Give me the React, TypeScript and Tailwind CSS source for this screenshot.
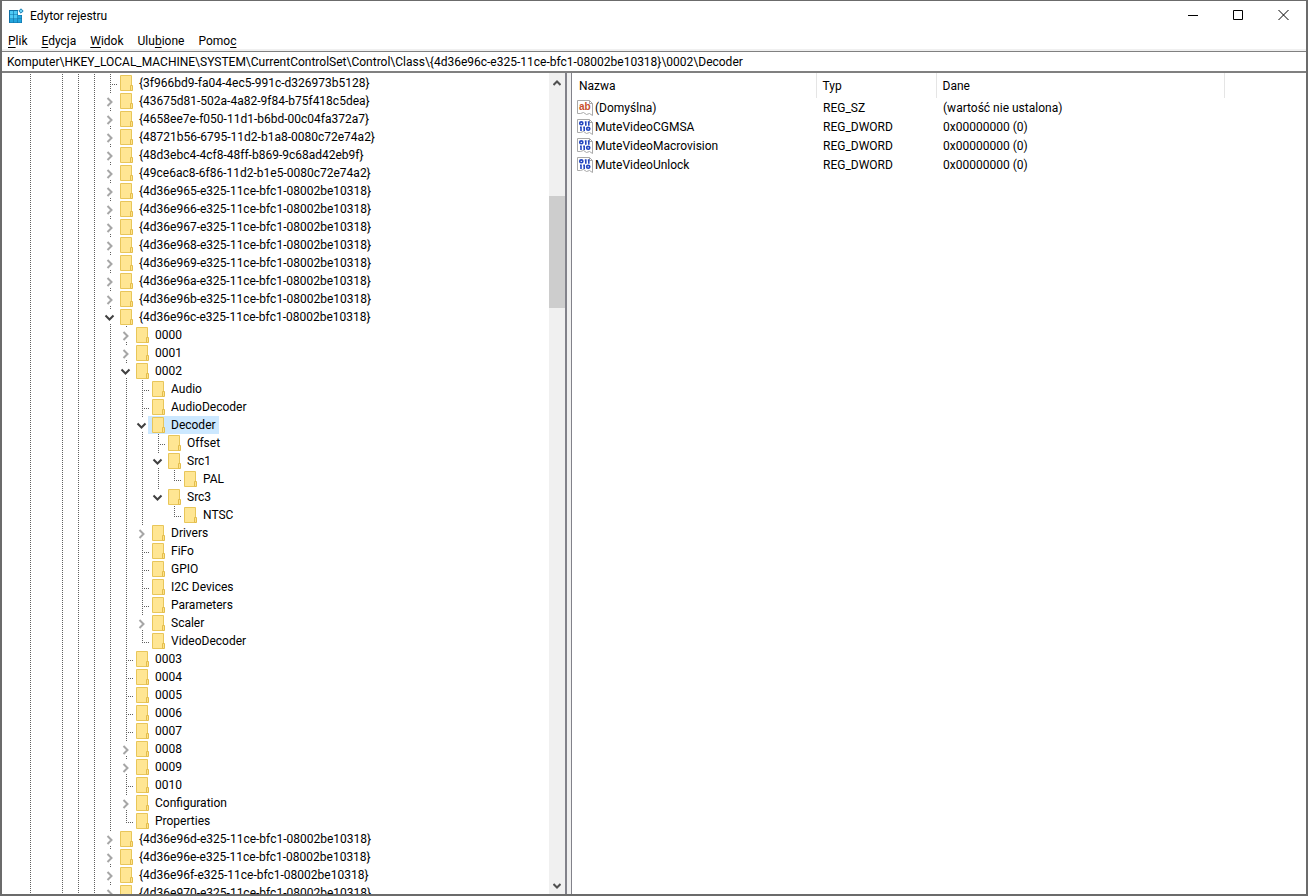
import { ReactNode, useState } from "react";

type NodeState = "open" | "closed" | "leaf";

interface TreeRow {
  name: string;
  state: NodeState;
  /**
   * One flag per ancestor column, true where the guide line runs through
   */
  guides: boolean[];
  /**
   * Does the guide line stop at this row?
   */
  last?: boolean;
}

const ROOT = [true, false, true, true, true];
const SUB = [...ROOT, true];
const DEVICE = [...SUB, true];
const DECODER = [...DEVICE, true];

const row = (
  guides: boolean[],
  name: string,
  state: NodeState = "leaf",
  last = false,
): TreeRow => ({ guides, name, state, last });

const rows: TreeRow[] = [
  row(ROOT, "{3f966bd9-fa04-4ec5-991c-d326973b5128}"),
  row(ROOT, "{43675d81-502a-4a82-9f84-b75f418c5dea}", "closed"),
  row(ROOT, "{4658ee7e-f050-11d1-b6bd-00c04fa372a7}", "closed"),
  row(ROOT, "{48721b56-6795-11d2-b1a8-0080c72e74a2}", "closed"),
  row(ROOT, "{48d3ebc4-4cf8-48ff-b869-9c68ad42eb9f}", "closed"),
  row(ROOT, "{49ce6ac8-6f86-11d2-b1e5-0080c72e74a2}", "closed"),
  row(ROOT, "{4d36e965-e325-11ce-bfc1-08002be10318}", "closed"),
  row(ROOT, "{4d36e966-e325-11ce-bfc1-08002be10318}", "closed"),
  row(ROOT, "{4d36e967-e325-11ce-bfc1-08002be10318}", "closed"),
  row(ROOT, "{4d36e968-e325-11ce-bfc1-08002be10318}", "closed"),
  row(ROOT, "{4d36e969-e325-11ce-bfc1-08002be10318}", "closed"),
  row(ROOT, "{4d36e96a-e325-11ce-bfc1-08002be10318}", "closed"),
  row(ROOT, "{4d36e96b-e325-11ce-bfc1-08002be10318}", "closed"),
  row(ROOT, "{4d36e96c-e325-11ce-bfc1-08002be10318}", "open"),
  row(SUB, "0000", "closed"),
  row(SUB, "0001", "closed"),
  row(SUB, "0002", "open"),
  row(DEVICE, "Audio"),
  row(DEVICE, "AudioDecoder"),
  row(DEVICE, "Decoder", "open"),
  row(DECODER, "Offset"),
  row(DECODER, "Src1", "open"),
  row([...DECODER, true], "PAL", "leaf", true),
  row(DECODER, "Src3", "open", true),
  row([...DECODER, false], "NTSC", "leaf", true),
  row(DEVICE, "Drivers", "closed"),
  row(DEVICE, "FiFo"),
  row(DEVICE, "GPIO"),
  row(DEVICE, "I2C Devices"),
  row(DEVICE, "Parameters"),
  row(DEVICE, "Scaler", "closed"),
  row(DEVICE, "VideoDecoder", "leaf", true),
  row(SUB, "0003"),
  row(SUB, "0004"),
  row(SUB, "0005"),
  row(SUB, "0006"),
  row(SUB, "0007"),
  row(SUB, "0008", "closed"),
  row(SUB, "0009", "closed"),
  row(SUB, "0010"),
  row(SUB, "Configuration", "closed"),
  row(SUB, "Properties", "leaf", true),
  row(ROOT, "{4d36e96d-e325-11ce-bfc1-08002be10318}", "closed"),
  row(ROOT, "{4d36e96e-e325-11ce-bfc1-08002be10318}", "closed"),
  row(ROOT, "{4d36e96f-e325-11ce-bfc1-08002be10318}", "closed"),
  row(ROOT, "{4d36e970-e325-11ce-bfc1-08002be10318}", "closed"),
];

const values = [
  { name: "(Domyślna)", type: "REG_SZ", data: "(wartość nie ustalona)" },
  { name: "MuteVideoCGMSA", type: "REG_DWORD", data: "0x00000000 (0)" },
  { name: "MuteVideoMacrovision", type: "REG_DWORD", data: "0x00000000 (0)" },
  { name: "MuteVideoUnlock", type: "REG_DWORD", data: "0x00000000 (0)" },
];

// label split around the underlined access key
const menu = [
  ["", "P", "lik"],
  ["", "E", "dycja"],
  ["", "W", "idok"],
  ["Ulu", "b", "ione"],
  ["Pomo", "c", ""],
];

const RegistryIcon = () => (
  <svg width="16" height="16" viewBox="0 0 16 16" aria-hidden="true">
    <path d="M1 2h9v5h4v8H1z" fill="#0f6fa5" />
    <path
      d="M2 3h3.400v3.400H2zM6 3h3.400v3.400H6zM2 7h3.400v3.400H2zM6 7h3.400v3.400H6z"
      fill="#4cc9f5"
    />
    <path
      d="M10 7.500h3.400v3H10zM2 11h3.400v3.400H2zM6 11h3.400v3.400H6zM10 11h3.400v3.400h-3.400z"
      fill="#22a5dd"
    />
    <path d="M13 .8 15.2 3 13 5.2 10.8 3z" fill="#6fd3f7" stroke="#1b7fb3" />
  </svg>
);

const FolderIcon = () => (
  <svg width="16" height="18" viewBox="0 0 16 18" aria-hidden="true">
    <path d="M.5 1.5h11v15H.5z" fill="#ffe693" stroke="#e8c65a" />
    <path d="M10.5 11.5h2v5h-2z" fill="#ffe38a" stroke="#e3bd4c" />
  </svg>
);

const StringIcon = () => (
  <ValuePage>
    <text
      x="2"
      y="10"
      fontFamily="Liberation Sans"
      fontSize="10"
      fontWeight="700"
      fill="#c8502d">
      ab
    </text>
  </ValuePage>
);

const BinaryIcon = () => (
  <ValuePage>
    <g fill="none" stroke="#2447c0" strokeWidth="1.6">
      <ellipse cx="4.3" cy="4.3" rx="1.6" ry="1.4" />
      <path d="M8.8 2.300v4.400M11.8 2.300v4.400M7.8 3h1M10.8 3h1" />
      <path d="M4 7.600v4.400M7.200 7.600v4.400M3 8.300h1M6.200 8.300h1" />
      <ellipse cx="11.2" cy="9.8" rx="1.6" ry="1.4" />
    </g>
  </ValuePage>
);

const ValuePage = ({ children }: { children: ReactNode }) => (
  <svg
    width="16"
    height="16"
    viewBox="0 0 16 16"
    className="shrink-0"
    aria-hidden="true">
    <path
      d="M.5.5h12l3 3v12l-3-2-3 1-3-2-3 1h-3z"
      fill="#fff"
      stroke="#a9a9a9"
    />
    <path d="M12.5.5v3h3" fill="none" stroke="#a9a9a9" />
    {children}
  </svg>
);

const Guide = ({ visible }: { visible: boolean }) => (
  <svg width="16" height="18" className="shrink-0" aria-hidden="true">
    {visible && (
      <path d="M10.5 0v18" stroke="#606060" strokeDasharray="1 1" />
    )}
  </svg>
);

const Expander = ({ state, last }: { state: NodeState; last?: boolean }) => (
  <svg
    width="16"
    height="18"
    className="shrink-0 overflow-visible"
    aria-hidden="true">
    {state === "leaf" ? (
      <g stroke="#606060" strokeDasharray="1 1">
        <path d={last ? "M10.5 0v11" : "M10.5 0v18"} />
        <path d="M10 10.5h8" />
      </g>
    ) : (
      <>
        <path d="M10.5 0v1" stroke="#606060" />
        {!last && <path d="M10.5 16v1" stroke="#606060" />}
        <path
          d={state === "open" ? "M5.5 7.5l4 4 4-4" : "M7.5 6l4 4-4 4"}
          fill="none"
          stroke={state === "open" ? "#404040" : "#a6a6a6"}
          strokeWidth="2"
        />
      </>
    )}
  </svg>
);

const ScrollArrow = ({ up }: { up?: boolean }) => (
  <button
    type="button"
    aria-label={up ? "W górę" : "W dół"}
    className="flex h-4 items-center justify-center">
    <svg width="8" height="6" viewBox="0 0 8 6" aria-hidden="true">
      <path
        d={up ? "M.5 5L4 1.5 7.5 5" : "M.5 1L4 4.5 7.5 1"}
        fill="none"
        stroke="#505050"
        strokeWidth="2"
      />
    </svg>
  </button>
);

export default function App() {
  const [selected, setSelected] = useState("Decoder");
  const [path, setPath] = useState(
    "Komputer\\HKEY_LOCAL_MACHINE\\SYSTEM\\CurrentControlSet\\Control\\Class\\{4d36e96c-e325-11ce-bfc1-08002be10318}\\0002\\Decoder",
  );

  return (
    <div className="flex h-screen flex-col overflow-hidden border-2 border-t border-[#6b6b6b] bg-white font-['Roboto',sans-serif] text-xs text-black">
      <header className="flex h-[30px] shrink-0 items-center pl-1.5">
        <RegistryIcon />
        <h1 className="ml-1.5 flex-1">Edytor rejestru</h1>
        <button
          type="button"
          aria-label="Minimalizuj"
          className="flex h-7 w-[45px] items-center justify-center self-start">
          <svg width="11" height="10" aria-hidden="true">
            <path d="M0 5.5h10" stroke="#000" />
          </svg>
        </button>
        <button
          type="button"
          aria-label="Maksymalizuj"
          className="flex h-7 w-[45px] items-center justify-center self-start">
          <svg width="11" height="10" aria-hidden="true">
            <path d="M.5.5h9v9h-9z" fill="none" stroke="#000" />
          </svg>
        </button>
        <button
          type="button"
          aria-label="Zamknij"
          className="flex h-7 w-[45px] items-center justify-center self-start">
          <svg width="11" height="10" aria-hidden="true">
            <path d="M.5 0l10 10M10.5 0l-10 10" stroke="#000" />
          </svg>
        </button>
      </header>

      <nav className="flex h-5 shrink-0 items-center gap-3.5 border-b-2 border-[#f0f0f0] pt-0.5 pl-1.5">
        {menu.map(([before, key, after]) => (
          <button key={before + key} type="button">
            {before}
            <span className="underline underline-offset-2">{key}</span>
            {after}
          </button>
        ))}
      </nav>

      <input
        type="text"
        aria-label="Adres"
        value={path}
        onChange={(e) => setPath(e.target.value)}
        className="h-[22px] w-full shrink-0 border-t border-b-2 border-[#808080] px-[5px] outline-none"
      />

      <main className="flex min-h-0 flex-1">
        <section className="flex w-[565px] shrink-0 border-r-2 border-[#82828a]">
          <ul className="min-w-0 flex-1 overflow-hidden pt-px pl-[18px]">
            {rows.map(({ guides, name, state, last }) => (
              <li key={name} className="flex h-[18px]">
                {guides.map((visible, i) => (
                  <Guide key={i} visible={visible} />
                ))}
                <Expander state={state} last={last} />
                <button
                  type="button"
                  onClick={() => setSelected(name)}
                  className={
                    name === selected
                      ? "flex items-center gap-[3px] bg-[#cce8ff] pr-[3px] pl-1 whitespace-nowrap"
                      : "flex items-center gap-[3px] pr-[3px] pl-1 whitespace-nowrap"
                  }>
                  <FolderIcon />
                  {name}
                </button>
              </li>
            ))}
          </ul>
          <div className="flex w-4 shrink-0 flex-col justify-between bg-[#f0f0f0] pt-0.5">
            <ScrollArrow up />
            <div className="flex flex-1 flex-col pt-[105px]">
              <div className="h-28 bg-[#cdcdcd]" />
            </div>
            <ScrollArrow />
          </div>
        </section>

        <div className="w-1 shrink-0 bg-[#f0f0f0]" />

        <section className="min-w-0 flex-1 overflow-hidden border-l border-[#82828a]">
          <table className="w-full table-fixed border-collapse text-left">
            <colgroup>
              <col className="w-[244px]" />
              <col className="w-[120px]" />
              <col className="w-[288px]" />
              <col />
            </colgroup>
            <thead>
              <tr className="h-[25px]">
                <th className="border-r border-[#e5e5e5] pl-[7px] font-normal">
                  Nazwa
                </th>
                <th className="border-r border-[#e5e5e5] pl-1.5 font-normal">
                  Typ
                </th>
                <th className="border-r border-[#e5e5e5] pl-1.5 font-normal">
                  Dane
                </th>
                <td />
              </tr>
            </thead>
            <tbody>
              {values.map(({ name, type, data }) => (
                <tr key={name} className="h-[19px]">
                  <td className="p-0 pl-[5px]">
                    <div className="flex items-center gap-0.5">
                      {type === "REG_SZ" ? <StringIcon /> : <BinaryIcon />}
                      {name}
                    </div>
                  </td>
                  <td className="p-0 pl-[7px]">{type}</td>
                  <td className="p-0 pl-[7px]">{data}</td>
                  <td />
                </tr>
              ))}
            </tbody>
          </table>
        </section>
      </main>
    </div>
  );
}
